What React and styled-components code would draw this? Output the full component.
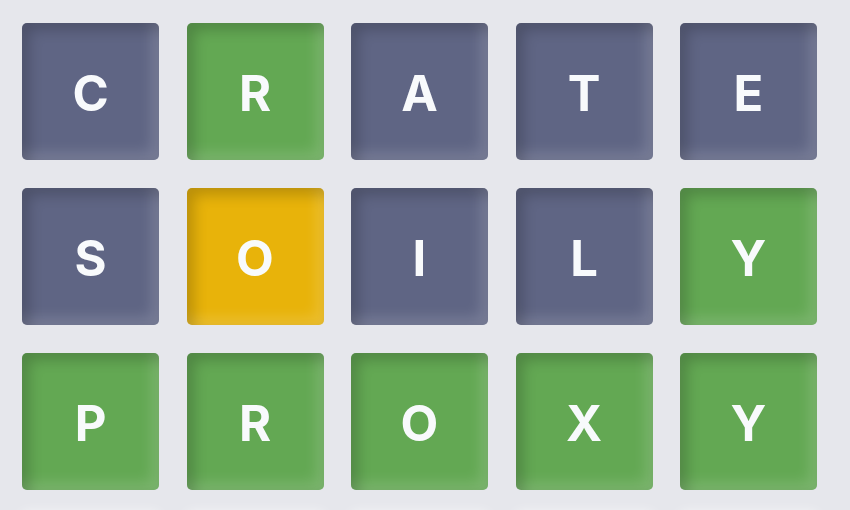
import React from 'react';
import styled, { createGlobalStyle } from 'styled-components';

const GlobalStyle = createGlobalStyle`
  html, body {
    margin: 0;
    background: #e6e7ec;
    overflow: hidden;
    font-family: Inter, "Liberation Sans", sans-serif;
  }
`;

const Board = styled.div`
  display: grid;
  grid-template-columns: repeat(5, 137px);
  grid-auto-rows: 137px;
  column-gap: 27.5px;
  row-gap: 28px;
  padding: 23px 22px;
  height: 510px;
  box-sizing: border-box;
  overflow: hidden;
`;

const colors = {
  absent: '#5f6584',
  correct: '#63a853',
  present: '#e8b30a',
  empty: '#eceef2',
};

const Tile = styled.div`
  display: flex;
  align-items: center;
  justify-content: center;
  padding-top: 4px;
  box-sizing: border-box;
  border-radius: 5px;
  background: ${(p) => colors[p.$state]};
  color: #f8fafc;
  font-size: 49px;
  font-weight: 700;
  box-shadow: ${(p) =>
    p.$state === 'empty'
      ? '0 -4px 14px rgba(255, 255, 255, 0.9)'
      : 'inset 7px 7px 14px rgba(0, 0, 0, 0.2), inset -7px -7px 14px rgba(255, 255, 255, 0.16)'};
`;

const rows = [
  [['C', 'absent'], ['R', 'correct'], ['A', 'absent'], ['T', 'absent'], ['E', 'absent']],
  [['S', 'absent'], ['O', 'present'], ['I', 'absent'], ['L', 'absent'], ['Y', 'correct']],
  [['P', 'correct'], ['R', 'correct'], ['O', 'correct'], ['X', 'correct'], ['Y', 'correct']],
  [['', 'empty'], ['', 'empty'], ['', 'empty'], ['', 'empty'], ['', 'empty']],
];

export default function App() {
  return (
    <>
      <GlobalStyle />
      <Board>
        {rows.flat().map(([letter, state], i) => (
          <Tile key={i} $state={state}>
            {letter}
          </Tile>
        ))}
      </Board>
    </>
  );
}
